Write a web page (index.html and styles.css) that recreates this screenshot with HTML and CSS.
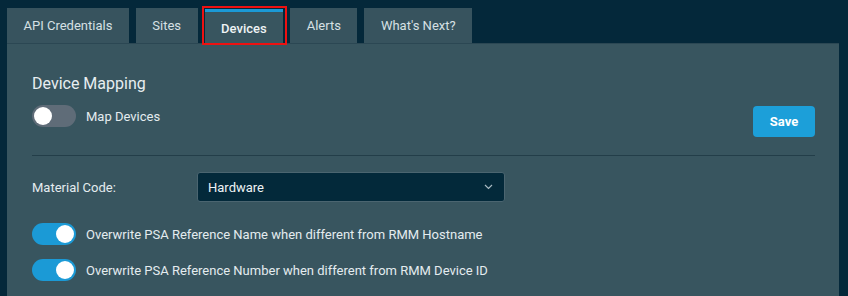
FILE: index.html
```html
<!DOCTYPE html>
<html lang="en">
<head>
    <meta charset="UTF-8">
    <meta name="viewport" content="width=device-width, initial-scale=1.0">
    <title>Device Mapping</title>
    <link rel="stylesheet" href="styles.css">
</head>
<body>
    <div class="tabs">
        <div class="tab">API Credentials</div>
        <div class="tab">Sites</div>
        <div class="tab active">Devices</div>
        <div class="tab">Alerts</div>
        <div class="tab">What's Next?</div>
    </div>

    <div class="panel">
        <div class="title">Device Mapping</div>
        <div class="header-row">
            <div class="toggle-container">
                <div class="toggle-button"><div class="toggle-circle"></div></div>
                <span>Map Devices</span>
            </div>
            <button class="save-button">Save</button>
        </div>

        <div class="divider"></div>

        <div class="field-row">
            <label>Material Code:</label>
            <div class="select">
                <span>Hardware</span>
                <svg class="chevron" width="9" height="6" viewBox="0 0 9 6">
                    <path d="M1 1 L4.5 4.5 L8 1" fill="none" stroke="#a9bac2" stroke-width="1.2"/>
                </svg>
            </div>
        </div>

        <div class="toggle-container option">
            <div class="toggle-button active"><div class="toggle-circle"></div></div>
            <span>Overwrite PSA Reference Name when different from RMM Hostname</span>
        </div>
        <div class="toggle-container option">
            <div class="toggle-button active"><div class="toggle-circle"></div></div>
            <span>Overwrite PSA Reference Number when different from RMM Device ID</span>
        </div>
    </div>
</body>
</html>
```

FILE: styles.css
```css
html, body {
    height: 100%;
}
body {
    margin: 0;
    padding: 8px 9px 0 7px;
    box-sizing: border-box;
    background-color: #04283a;
    color: #e4ecef;
    font-family: Roboto, "Liberation Sans", sans-serif;
    font-size: 13px;
    overflow: hidden;
    display: flex;
    flex-direction: column;
}
.tabs {
    display: flex;
    gap: 7px;
    height: 35px;
    position: relative;
    z-index: 1;
}
.tab {
    height: 35px;
    box-sizing: border-box;
    padding: 0 16.5px;
    display: flex;
    align-items: center;
    background-color: #37535e;
    color: #d6e0e4;
}
.tab.active {
    position: relative;
    margin-top: 1px;
    height: 35px;
    border-top: 3px solid #1b9ad6;
    background-color: #38555f;
    color: #eef3f5;
    font-weight: 500;
    padding-top: 1px;
}
.tab.active::after {
    content: "";
    position: absolute;
    top: -6px;
    left: -3px;
    right: -4px;
    bottom: -1px;
    border: 2px solid #ee1111;
}
.panel {
    flex: 1;
    background-color: #38555f;
    border-top: 1px solid #2b4753;
    padding: 30px 24px 0 25px;
}
.title {
    font-size: 16px;
    line-height: 20px;
    color: #e8eef1;
}
.header-row {
    display: flex;
    justify-content: space-between;
    align-items: flex-start;
    margin-top: 11px;
}
.toggle-container {
    display: flex;
    align-items: center;
    gap: 10px;
}
.toggle-button {
    width: 44px;
    height: 22px;
    border-radius: 11px;
    background-color: #5f6c78;
    position: relative;
    flex-shrink: 0;
}
.toggle-button.active {
    background-color: #1b9ad6;
}
.toggle-circle {
    width: 18px;
    height: 18px;
    border-radius: 50%;
    background-color: white;
    position: absolute;
    top: 2px;
    left: 2px;
}
.toggle-button.active .toggle-circle {
    left: 24px;
}
.save-button {
    width: 62px;
    height: 31px;
    margin-top: 1px;
    border: none;
    border-radius: 4px;
    background-color: #1c9fd9;
    color: white;
    font-family: Roboto, "Liberation Sans", sans-serif;
    font-size: 13px;
    font-weight: bold;
}
.divider {
    height: 1px;
    background-color: #233e49;
    margin-top: 18px;
}
.field-row {
    display: flex;
    align-items: center;
    margin-top: 16px;
}
.field-row label {
    width: 165px;
}
.select {
    width: 308px;
    height: 30px;
    box-sizing: border-box;
    background-color: #03293a;
    border: 1px solid #4b6570;
    border-radius: 3px;
    display: flex;
    align-items: center;
    justify-content: space-between;
    padding: 0 11px 0 10px;
    color: #eef3f5;
}
.option {
    margin-top: 14px;
}
.field-row + .option {
    margin-top: 21px;
}
```
